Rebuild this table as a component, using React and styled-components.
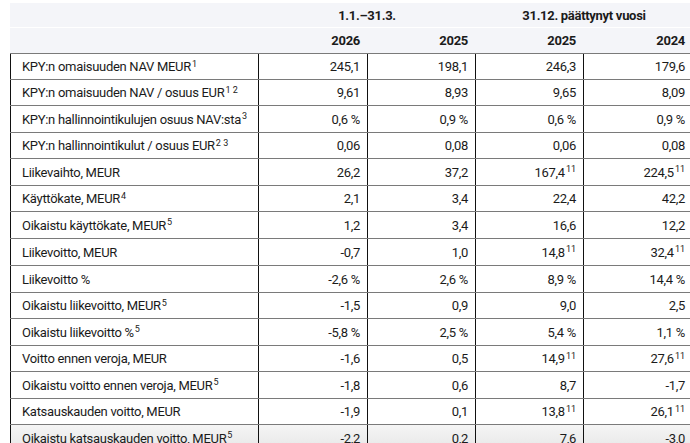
import React from 'react';
import styled, { createGlobalStyle } from 'styled-components';

const GlobalStyle = createGlobalStyle`
  html, body {
    margin: 0;
    padding: 0;
    background: #fff;
    overflow: hidden;
  }
  body {
    font-family: Roboto, "Liberation Sans", Arial, sans-serif;
    color: #1b1b1b;
  }
`

const rows = [
  { h: 25, label: 'KPY:n omaisuuden NAV MEUR', sup: '1', v: ['245,1', '198,1', '246,3', '179,6'] },
  { h: 25, label: 'KPY:n omaisuuden NAV / osuus EUR', sup: '1 2', v: ['9,61', '8,93', '9,65', '8,09'] },
  { h: 26, label: 'KPY:n hallinnointikulujen osuus NAV:sta', sup: '3', v: ['0,6 %', '0,9 %', '0,6 %', '0,9 %'] },
  { h: 25, label: 'KPY:n hallinnointikulut / osuus EUR', sup: '2 3', v: ['0,06', '0,08', '0,06', '0,08'] },
  { h: 26, label: 'Liikevaihto, MEUR', v: ['26,2', '37,2', ['167,4', '11'], ['224,5', '11']] },
  { h: 25, label: 'Käyttökate, MEUR', sup: '4', v: ['2,1', '3,4', '22,4', '42,2'] },
  { h: 26, label: 'Oikaistu käyttökate, MEUR', sup: '5', v: ['1,2', '3,4', '16,6', '12,2'] },
  { h: 26, label: 'Liikevoitto, MEUR', v: ['-0,7', '1,0', ['14,8', '11'], ['32,4', '11']] },
  { h: 26, label: 'Liikevoitto %', v: ['-2,6 %', '2,6 %', '8,9 %', '14,4 %'] },
  { h: 25, label: 'Oikaistu liikevoitto, MEUR', sup: '5', v: ['-1,5', '0,9', '9,0', '2,5'] },
  { h: 26, label: 'Oikaistu liikevoitto %', sup: '5', v: ['-5,8 %', '2,5 %', '5,4 %', '1,1 %'] },
  { h: 25, label: 'Voitto ennen veroja, MEUR', v: ['-1,6', '0,5', ['14,9', '11'], ['27,6', '11']] },
  { h: 26, label: 'Oikaistu voitto ennen veroja, MEUR', sup: '5', v: ['-1,8', '0,6', '8,7', '-1,7'] },
  { h: 25, label: 'Katsauskauden voitto, MEUR', v: ['-1,9', '0,1', ['13,8', '11'], ['26,1', '11']] },
  { h: 26, label: 'Oikaistu katsauskauden voitto, MEUR', sup: '5', v: ['-2,2', '0,2', '7,6', '-3,0'] },
]

const App = () => {
  return (
    <Page>
      <GlobalStyle />
      <Header>
        <HeadRow $h={24}>
          <HeadCell />
          <HeadCell $span={2} $center>1.1.–31.3.</HeadCell>
          <HeadCell $span={2} $center>31.12. päättynyt vuosi</HeadCell>
        </HeadRow>
        <HeadRow $h={25}>
          <HeadCell />
          <HeadCell>2026</HeadCell>
          <HeadCell>2025</HeadCell>
          <HeadCell>2025</HeadCell>
          <HeadCell>2024</HeadCell>
        </HeadRow>
      </Header>
      <Body>
        {rows.map((r, i) => {
          const last = i === rows.length - 1
          return (
            <Row key={i} $h={r.h}>
              <Cell $label $last={last}>
                {r.label}
                {r.sup && <Sup>{r.sup}</Sup>}
              </Cell>
              {r.v.map((val, j) => (
                <Cell key={j} $last={last}>
                  {Array.isArray(val) ? (
                    <>
                      {val[0]}
                      <Sup>{val[1]}</Sup>
                    </>
                  ) : val}
                </Cell>
              ))}
            </Row>
          )
        })}
      </Body>
    </Page>
  )
}

const columns = '247px 108px 107px 107px 108px'

const Page = styled.div`
  width: 690px;
  height: 443px;
  overflow: hidden;
  padding: 3px 0 0 10px;
  box-sizing: border-box;
  font-size: 13px;
  letter-spacing: -0.3px;
  line-height: 1;
`

const Header = styled.div`
  display: flex;
  flex-direction: column;
  gap: 1px;
  width: 682px;
  background: #fff;
`

const HeadRow = styled.div`
  display: grid;
  grid-template-columns: ${columns};
  column-gap: 1px;
  padding-left: 1px;
  height: ${p => p.$h}px;
  background: #f4f5f9;
`

const HeadCell = styled.div`
  grid-column: span ${p => p.$span || 1};
  display: flex;
  align-items: center;
  justify-content: ${p => (p.$center ? 'center' : 'flex-end')};
  padding: ${p => (p.$center ? '0' : '0 7px 0 8px')};
  font-weight: 700;
  color: #1b1b1b;
`

const Body = styled.div`
  display: flex;
  flex-direction: column;
  gap: 1px;
  padding-top: 1px;
  width: 682px;
  background: #7a7a7a;
`

const Row = styled.div`
  display: grid;
  grid-template-columns: ${columns};
  column-gap: 1px;
  padding-left: 1px;
  height: ${p => p.$h}px;
  flex-shrink: 0;
  background: #111;
`

const Cell = styled.div`
  display: flex;
  align-items: center;
  justify-content: ${p => (p.$label ? 'flex-start' : 'flex-end')};
  padding: ${p => (p.$label ? '0 8px 0 11px' : '0 7px 0 8px')};
  white-space: nowrap;
  background: ${p => (p.$last ? 'linear-gradient(to bottom, #f5f5f5, #e6e6e6)' : '#fff')};
`

const Sup = styled.sup`
  font-size: 9px;
  letter-spacing: 0;
  line-height: 0;
  align-self: flex-start;
  margin-top: 10px;
  margin-left: 1px;
  white-space: pre;
`

export default App;
